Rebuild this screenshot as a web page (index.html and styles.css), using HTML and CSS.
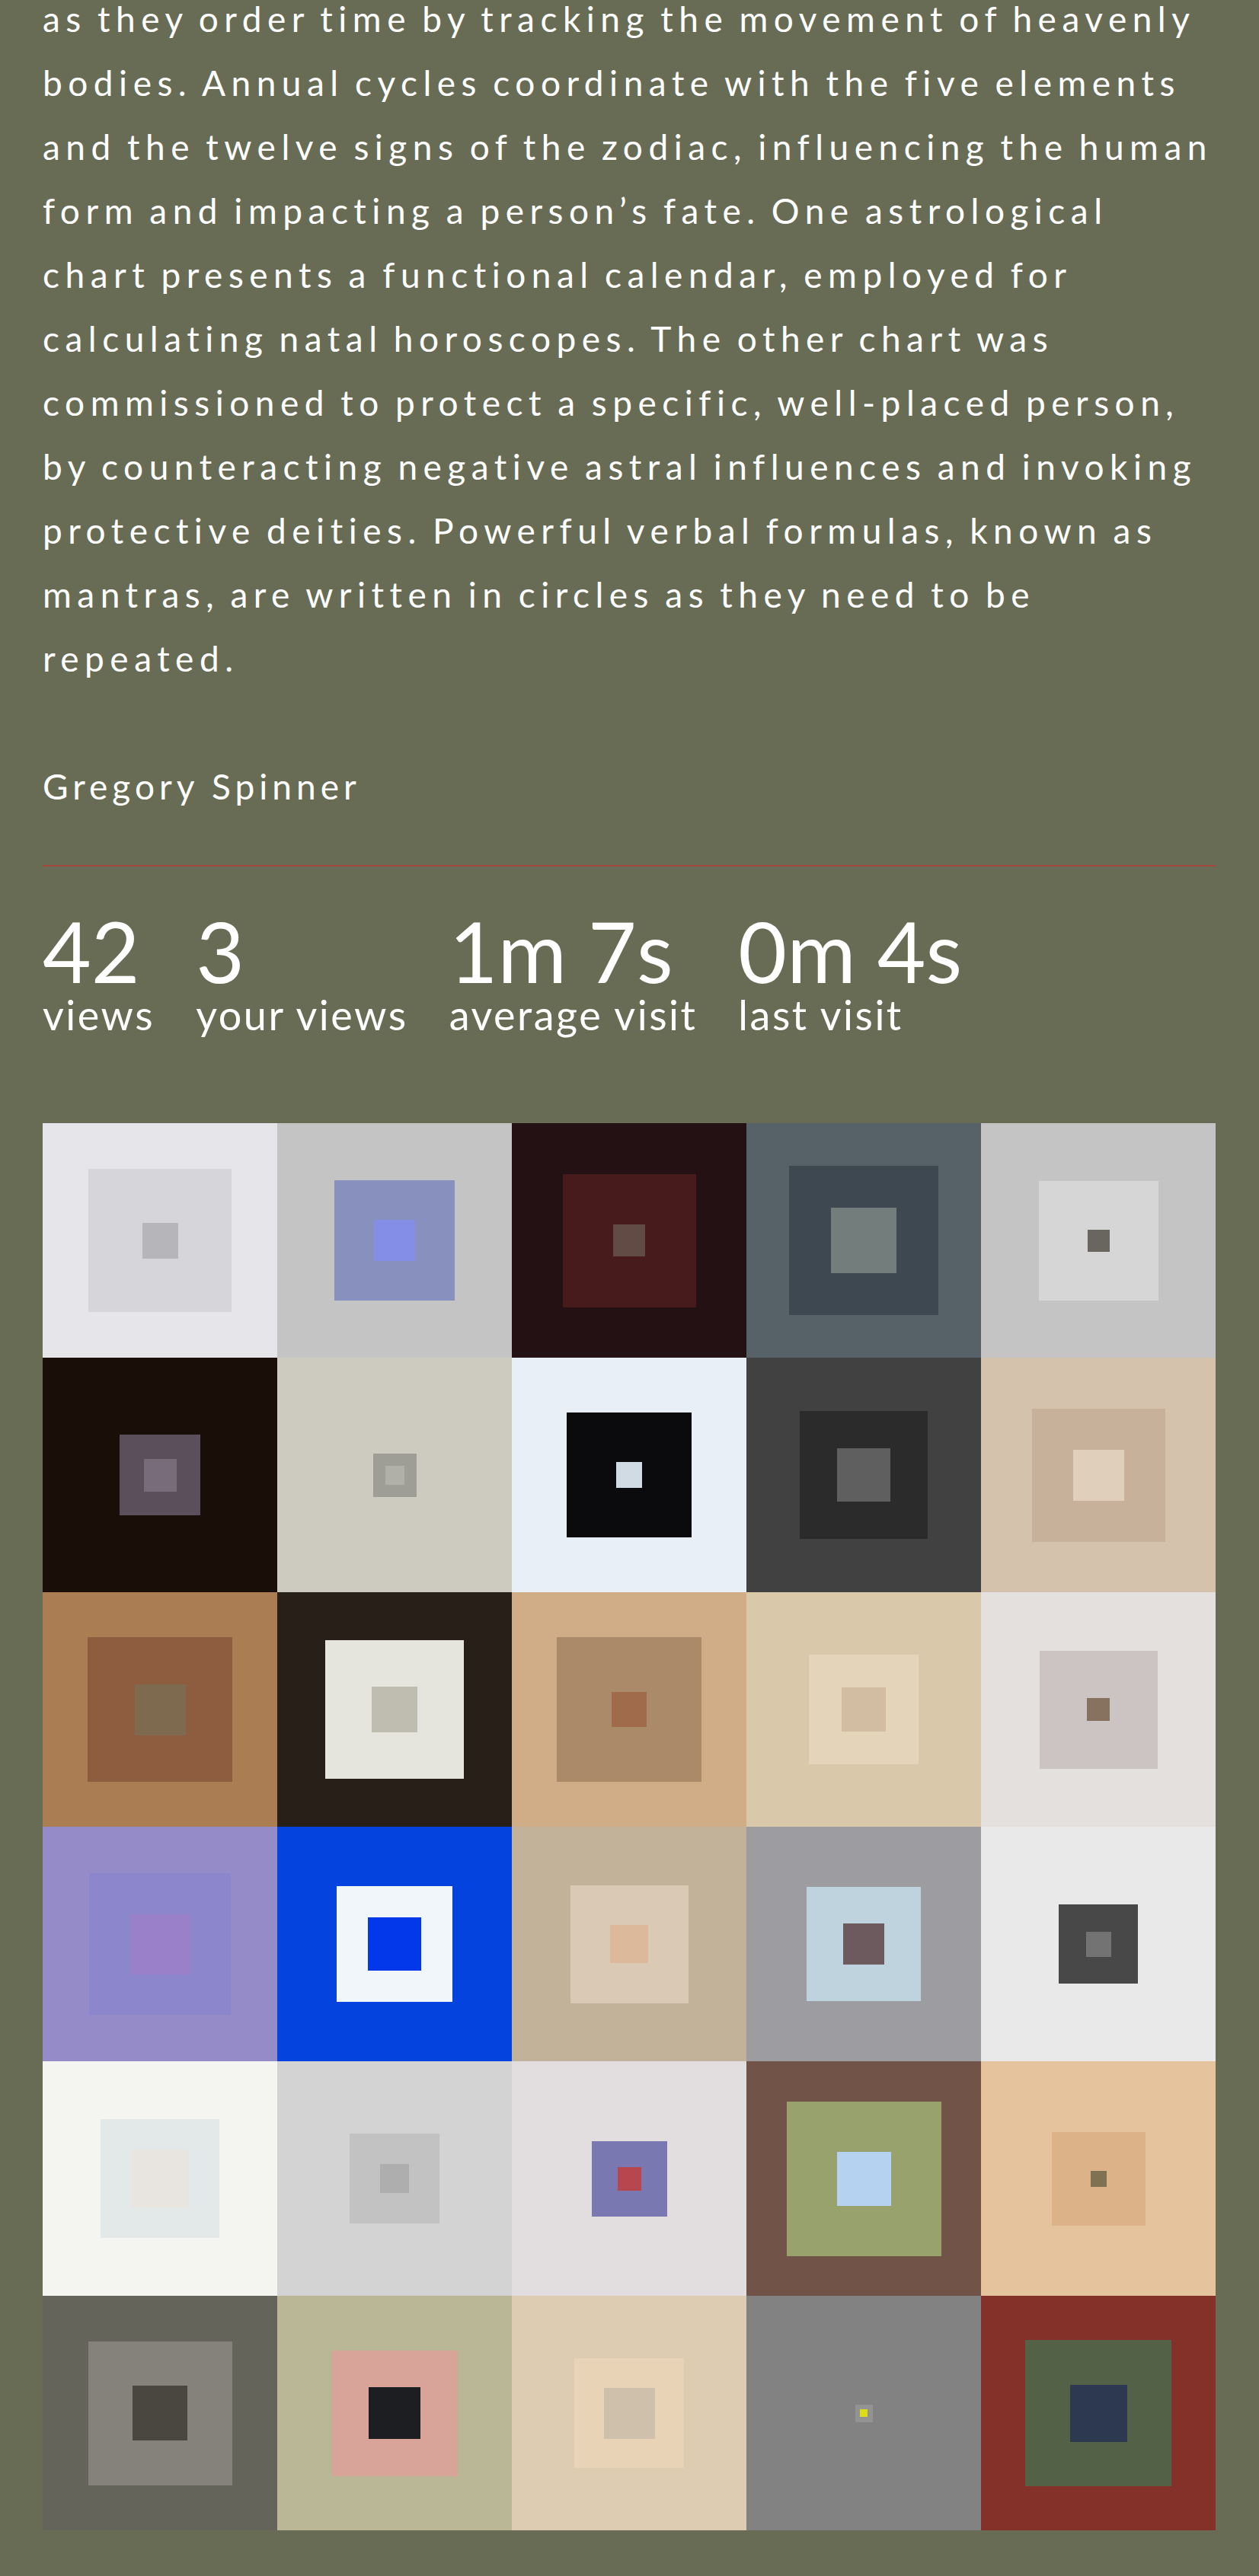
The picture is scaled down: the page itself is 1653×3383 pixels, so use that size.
FILE: index.html
```html
<!DOCTYPE html>
<html lang="en">
<head>
<meta charset="utf-8">
<title>Gregory Spinner</title>
<link rel="stylesheet" href="styles.css">
</head>
<body>
<main class="page">
  <p class="body-text">as they order time by tracking the movement of heavenly bodies. Annual cycles coordinate with the five elements and the twelve signs of the zodiac, influencing the human form and impacting a person’s fate. One astrological chart presents a functional calendar, employed for calculating natal horoscopes. The other chart was commissioned to protect a specific, well-placed person, by counteracting negative astral influences and invoking protective deities. Powerful verbal formulas, known as mantras, are written in circles as they need to be repeated.</p>
  <p class="author">Gregory Spinner</p>
  <hr class="divider">
  <section class="stats">
    <div class="stat"><div class="stat-num">42</div><div class="stat-label">views</div></div>
    <div class="stat"><div class="stat-num">3</div><div class="stat-label">your views</div></div>
    <div class="stat"><div class="stat-num">1m 7s</div><div class="stat-label">average visit</div></div>
    <div class="stat"><div class="stat-num">0m 4s</div><div class="stat-label">last visit</div></div>
  </section>
  <section class="grid">
    <div class="tile" style="--bg:#e6e5e9;--m:188px;--mc:#d5d5da;--i:47px;--ic:#b6b5ba"><div class="mid"><div class="inner"></div></div></div>
    <div class="tile" style="--bg:#c4c4c4;--m:158px;--mc:#8891bd;--i:54px;--ic:#848ee6"><div class="mid"><div class="inner"></div></div></div>
    <div class="tile" style="--bg:#241114;--m:175px;--mc:#471b1b;--i:42px;--ic:#624b45"><div class="mid"><div class="inner"></div></div></div>
    <div class="tile" style="--bg:#566268;--m:196px;--mc:#3e4850;--i:86px;--ic:#737e7c"><div class="mid"><div class="inner"></div></div></div>
    <div class="tile" style="--bg:#c4c4c4;--m:157px;--mc:#d6d6d6;--i:29px;--ic:#69655f"><div class="mid"><div class="inner"></div></div></div>

    <div class="tile" style="--bg:#1a0f08;--m:106px;--mc:#5c4f5c;--i:43px;--ic:#786b7a"><div class="mid"><div class="inner"></div></div></div>
    <div class="tile" style="--bg:#cdcbc0;--m:57px;--mc:#9e9e96;--i:25px;--ic:#b0b0a8"><div class="mid"><div class="inner"></div></div></div>
    <div class="tile" style="--bg:#e8eff6;--m:164px;--mc:#0b0b0d;--i:34px;--ic:#d0dbe3"><div class="mid"><div class="inner"></div></div></div>
    <div class="tile" style="--bg:#414141;--m:168px;--mc:#2b2b2b;--i:70px;--ic:#5f5f5f"><div class="mid"><div class="inner"></div></div></div>
    <div class="tile" style="--bg:#d4c2ad;--m:175px;--mc:#c8b19a;--i:67px;--ic:#e0d0bb"><div class="mid"><div class="inner"></div></div></div>

    <div class="tile" style="--bg:#ab7d52;--m:190px;--mc:#8e5d40;--i:67px;--ic:#7d6a4f"><div class="mid"><div class="inner"></div></div></div>
    <div class="tile" style="--bg:#282018;--m:182px;--mc:#e5e4dd;--i:60px;--ic:#bfbcb0"><div class="mid"><div class="inner"></div></div></div>
    <div class="tile" style="--bg:#d1ad87;--m:190px;--mc:#ab8a6a;--i:46px;--ic:#a06b4b"><div class="mid"><div class="inner"></div></div></div>
    <div class="tile" style="--bg:#dac8ab;--m:144px;--mc:#e4d4ba;--i:58px;--ic:#d3bda2"><div class="mid"><div class="inner"></div></div></div>
    <div class="tile" style="--bg:#e4e0dd;--m:155px;--mc:#cbc4c2;--i:30px;--ic:#87715f"><div class="mid"><div class="inner"></div></div></div>

    <div class="tile" style="--bg:#958bc8;--m:186px;--mc:#8c86cc;--i:79px;--ic:#9a7fc9"><div class="mid"><div class="inner"></div></div></div>
    <div class="tile" style="--bg:#0443dd;--m:152px;--mc:#f0f6fa;--i:70px;--ic:#0238ea"><div class="mid"><div class="inner"></div></div></div>
    <div class="tile" style="--bg:#c3b29a;--m:155px;--mc:#dac9b4;--i:50px;--ic:#dbb99a"><div class="mid"><div class="inner"></div></div></div>
    <div class="tile" style="--bg:#9d9ca0;--m:150px;--mc:#bed3de;--i:54px;--ic:#6c5a5f"><div class="mid"><div class="inner"></div></div></div>
    <div class="tile" style="--bg:#e9e9e9;--m:104px;--mc:#484848;--i:33px;--ic:#737373"><div class="mid"><div class="inner"></div></div></div>

    <div class="tile" style="--bg:#f4f5f1;--m:156px;--mc:#e3e8e8;--i:76px;--ic:#e8e4df"><div class="mid"><div class="inner"></div></div></div>
    <div class="tile" style="--bg:#d3d3d3;--m:118px;--mc:#c2c2c2;--i:38px;--ic:#aeaeae"><div class="mid"><div class="inner"></div></div></div>
    <div class="tile" style="--bg:#e2dedf;--m:99px;--mc:#7a78b1;--i:31px;--ic:#b8464f"><div class="mid"><div class="inner"></div></div></div>
    <div class="tile" style="--bg:#715347;--m:203px;--mc:#98a26c;--i:71px;--ic:#b5d3f0"><div class="mid"><div class="inner"></div></div></div>
    <div class="tile" style="--bg:#e5c39d;--m:123px;--mc:#dcb388;--i:21px;--ic:#7e7253"><div class="mid"><div class="inner"></div></div></div>

    <div class="tile" style="--bg:#65645b;--m:189px;--mc:#84827a;--i:72px;--ic:#4a4741"><div class="mid"><div class="inner"></div></div></div>
    <div class="tile" style="--bg:#b9b795;--m:165px;--mc:#d8a398;--i:68px;--ic:#1c1e21"><div class="mid"><div class="inner"></div></div></div>
    <div class="tile" style="--bg:#ddccb2;--m:144px;--mc:#e8d3b7;--i:67px;--ic:#cec0aa"><div class="mid"><div class="inner"></div></div></div>
    <div class="tile" style="--bg:#828282;--m:23px;--mc:#939393;--i:10px;--ic:#dddd14"><div class="mid"><div class="inner"></div></div></div>
    <div class="tile" style="--bg:#843229;--m:192px;--mc:#536146;--i:75px;--ic:#2c3951"><div class="mid"><div class="inner"></div></div></div>
  </section>
</main>
</body>
</html>
```
FILE: styles.css
```css
html, body {
  margin: 0;
  padding: 0;
  background: #686c55;
}

body {
  color: #ffffff;
  font-family: "Lato", "Open Sans", sans-serif;
}

.page {
  width: 1540px;
  margin: 0 0 0 56px;
  padding: 0 0 59px 0;
}

.body-text {
  margin: -17px 0 0 0;
  font-size: 46px;
  line-height: 84px;
  letter-spacing: 7.5px;
  word-spacing: -5px;
}

.author {
  margin: 84px 0 0 0;
  font-size: 46px;
  line-height: 84px;
  letter-spacing: 6px;
}

.divider {
  margin: 61px 0 0 0;
  border: 0;
  height: 2px;
  background: #a4473c;
}

.stats {
  display: flex;
  gap: 54px;
  margin-top: 55px;
}

.stat-num {
  font-size: 110px;
  line-height: 110px;
}

.stat-label {
  font-size: 54px;
  line-height: 60px;
  letter-spacing: 2.5px;
}

.grid {
  display: grid;
  grid-template-columns: repeat(5, 308px);
  grid-auto-rows: 308px;
  margin-top: 112px;
}

.tile {
  background: var(--bg);
  display: flex;
  align-items: center;
  justify-content: center;
}

.mid {
  width: var(--m);
  height: var(--m);
  background: var(--mc);
  display: flex;
  align-items: center;
  justify-content: center;
}

.inner {
  width: var(--i);
  height: var(--i);
  background: var(--ic);
}
```
